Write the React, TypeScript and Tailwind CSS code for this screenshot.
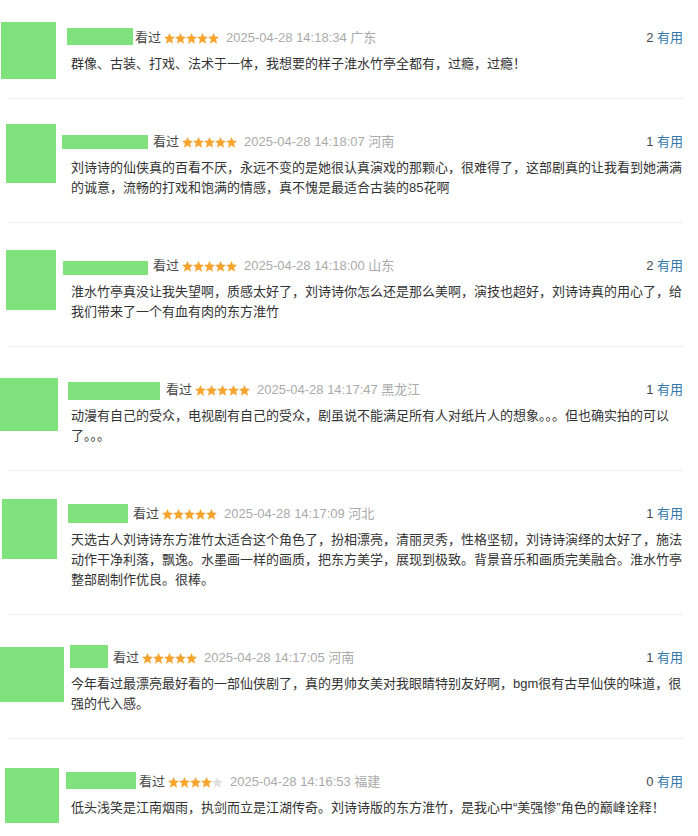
import React from 'react';

type Review = {
  av: string;
  nm: string;
  gap: string;
  stars: number;
  time: string;
  loc: string;
  votes: number;
  text: string;
  first?: boolean;
};

const reviews: Review[] = [
  {
    first: true,
    av: 'ml-[1px] -mt-[6px] w-[55px] h-[57px]',
    nm: '-ml-[4px] mt-0 w-[66px] h-[17px]',
    gap: 'ml-[2px]',
    stars: 5,
    time: '2025-04-28 14:18:34',
    loc: '广东',
    votes: 2,
    text: '群像、古装、打戏、法术于一体，我想要的样子淮水竹亭全都有，过瘾，过瘾！',
  },
  {
    av: 'ml-[6px] -mt-[8px] w-[50px] h-[59px]',
    nm: '-ml-[9px] mt-[3px] w-[86px] h-[14px]',
    gap: 'ml-[5px]',
    stars: 5,
    time: '2025-04-28 14:18:07',
    loc: '河南',
    votes: 1,
    text: '刘诗诗的仙侠真的百看不厌，永远不变的是她很认真演戏的那颗心，很难得了，这部剧真的让我看到她满满的诚意，流畅的打戏和饱满的情感，真不愧是最适合古装的85花啊',
  },
  {
    av: 'ml-[6px] -mt-[6px] w-[50px] h-[60px]',
    nm: '-ml-[8px] mt-[5px] w-[85px] h-[14px]',
    gap: 'ml-[5px]',
    stars: 5,
    time: '2025-04-28 14:18:00',
    loc: '山东',
    votes: 2,
    text: '淮水竹亭真没让我失望啊，质感太好了，刘诗诗你怎么还是那么美啊，演技也超好，刘诗诗真的用心了，给我们带来了一个有血有肉的东方淮竹',
  },
  {
    av: 'ml-0 -mt-[2px] w-[58px] h-[53px]',
    nm: '-ml-[3px] mt-[2px] w-[92px] h-[18px]',
    gap: 'ml-[6px]',
    stars: 5,
    time: '2025-04-28 14:17:47',
    loc: '黑龙江',
    votes: 1,
    text: '动漫有自己的受众，电视剧有自己的受众，剧虽说不能满足所有人对纸片人的想象。。。但也确实拍的可以了。。。',
  },
  {
    av: 'ml-[2px] -mt-[5px] w-[55px] h-[60px]',
    nm: '-ml-[3px] mt-0 w-[60px] h-[19px]',
    gap: 'ml-[5px]',
    stars: 5,
    time: '2025-04-28 14:17:09',
    loc: '河北',
    votes: 1,
    text: '天选古人刘诗诗东方淮竹太适合这个角色了，扮相漂亮，清丽灵秀，性格坚韧，刘诗诗演绎的太好了，施法动作干净利落，飘逸。水墨画一样的画质，把东方美学，展现到极致。背景音乐和画质完美融合。淮水竹亭整部剧制作优良。很棒。',
  },
  {
    av: 'ml-0 -mt-[1px] w-[64px] h-[55px]',
    nm: '-ml-[1px] -mt-[3px] w-[38px] h-[23px]',
    gap: 'ml-[5px]',
    stars: 5,
    time: '2025-04-28 14:17:05',
    loc: '河南',
    votes: 1,
    text: '今年看过最漂亮最好看的一部仙侠剧了，真的男帅女美对我眼睛特别友好啊，bgm很有古早仙侠的味道，很强的代入感。',
  },
  {
    av: 'ml-[5px] -mt-[4px] w-[54px] h-[55px]',
    nm: '-ml-[5px] mt-0 w-[70px] h-[17px]',
    gap: 'ml-[3px]',
    stars: 4,
    time: '2025-04-28 14:16:53',
    loc: '福建',
    votes: 0,
    text: '低头浅笑是江南烟雨，执剑而立是江湖传奇。刘诗诗版的东方淮竹，是我心中“美强惨”角色的巅峰诠释！',
  },
];

function Star({ on }: { on: boolean }) {
  return (
    <svg viewBox="0 0 11 11" className="w-[11px] h-[11px]">
      <polygon
        points="5.5,0 7.1,3.6 11,3.9 8.05,6.5 9,10.7 5.5,8.6 2,10.7 2.95,6.5 0,3.9 3.9,3.6"
        fill={on ? '#f8a530' : '#e1e1e1'}
      />
    </svg>
  );
}

function ReviewItem({ r }: { r: Review }) {
  return (
    <div className={`flex items-start pb-[24px] ${r.first ? 'pt-[28px]' : 'pt-[33px]'}`}>
      {/* avatar column takes no height: the text column sets the row height */}
      <div className="w-[71px] h-0 shrink-0">
        <div className={`bg-[#7fe27d] ${r.av}`} />
      </div>
      <div className="w-[612px]">
        <div className="flex justify-between items-start h-[20px] leading-[20px]">
          <div className="flex items-start">
            <span className={`inline-block bg-[#7fe27d] ${r.nm}`} />
            <span className={`${r.gap} h-[20px] text-[#494949]`}>看过</span>
            <span className="ml-[3px] h-[20px] flex items-center">
              {[0, 1, 2, 3, 4].map((i) => (
                <Star key={i} on={i < r.stars} />
              ))}
            </span>
            <span className="ml-[7px] h-[20px] text-[#aaa]">
              {r.time} {r.loc}
            </span>
          </div>
          <div className="h-[20px]">
            <span className="text-[#494949]">{r.votes}</span>{' '}
            <span className="text-[#3377aa]">有用</span>
          </div>
        </div>
        <p className="mt-[6px] leading-[20px] text-[#333]">{r.text}</p>
      </div>
    </div>
  );
}

export default function App() {
  return (
    <div
      className="w-[698px] h-[836px] bg-white text-[13px] overflow-hidden"
      style={{ fontFamily: '"Liberation Sans", Arial, "Noto Sans CJK SC", sans-serif' }}
    >
      <div className="w-[683px]">
        {reviews.map((r, i) => (
          <div key={i}>
            {i > 0 && <div className="ml-[8px] w-[675px] h-px bg-[#eeeeee]" />}
            <ReviewItem r={r} />
          </div>
        ))}
      </div>
    </div>
  );
}
